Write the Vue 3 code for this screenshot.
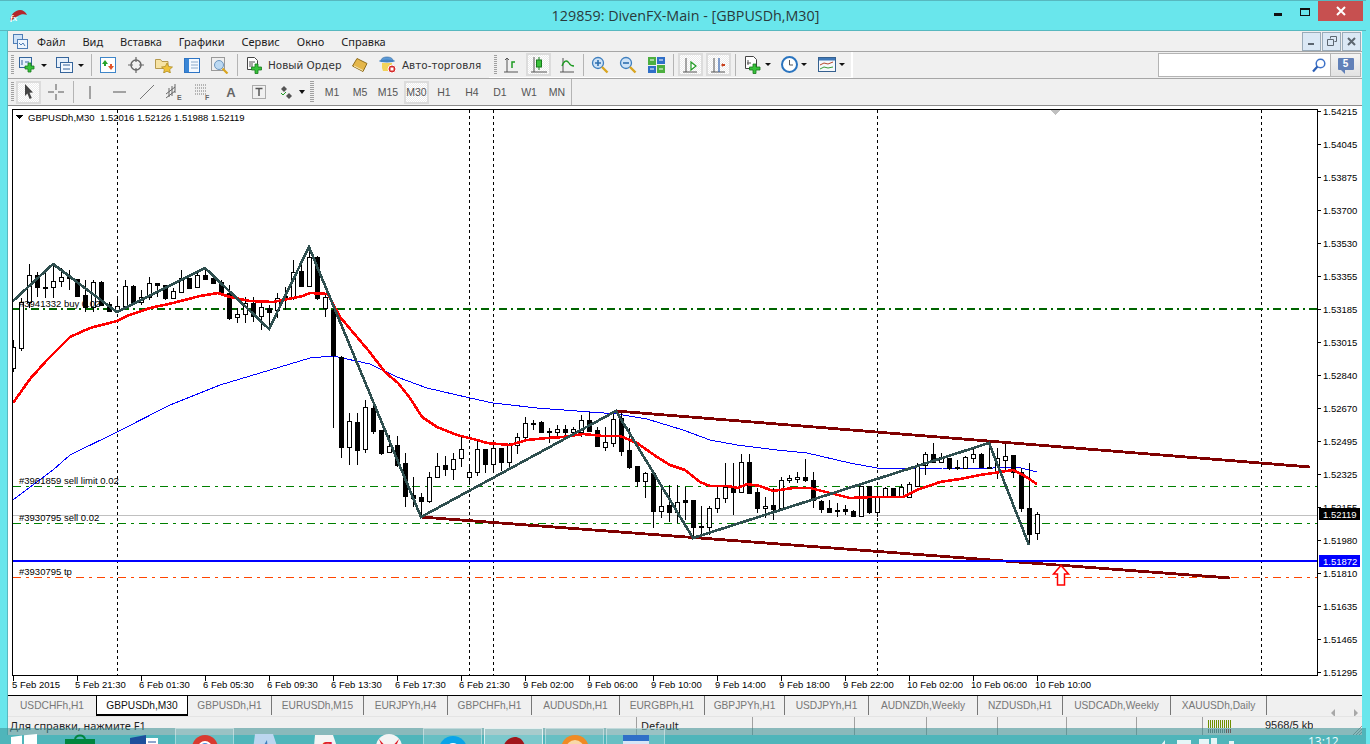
<script setup>
// [top, bottom, high, low, white] in chart pixels, one candle every 8px from x=13
const raw = [
  [347,368,340,372,1],[302,348,298,351,1],[275,302,264,308,1],[275,287,272,297,0],[287,288,273,298,0],
  [281,287,265,298,1],[277,281,268,287,1],[277,278,270,290,0],[279,296,279,297,0],[295,307,280,312,0],
  [282,307,280,312,1],[282,305,281,306,0],[304,311,302,312,0],[306,311,298,313,1],[286,306,280,308,1],
  [286,302,285,305,0],[297,302,290,305,1],[283,297,277,300,1],[283,285,283,297,0],[285,298,285,300,0],
  [291,298,288,299,1],[278,292,270,293,1],[278,288,278,289,0],[275,287,270,288,1],[275,279,268,280,0],
  [278,283,275,284,0],[282,293,280,295,0],[293,318,285,320,0],[314,317,308,323,1],[303,314,297,323,1],
  [303,316,297,322,0],[307,316,302,330,1],[308,312,305,327,0],[298,310,293,318,1],[296,298,287,310,0],
  [272,298,260,300,1],[271,286,260,287,0],[257,286,247,287,1],[257,298,256,300,0],[297,308,295,317,1],
  [310,355,308,428,0],[357,447,356,458,0],[421,447,413,465,1],[422,450,413,465,0],[407,449,400,453,1],
  [408,431,400,434,0],[430,453,430,455,0],[446,452,435,453,1],[445,465,436,467,0],[463,496,453,507,0],
  [495,498,477,507,0],[497,501,493,518,0],[477,501,472,503,1],[466,477,453,478,1],[465,469,456,476,0],
  [459,469,453,480,1],[449,458,437,467,1],[472,477,465,483,1],[449,472,441,476,1],[449,464,449,473,0],
  [448,464,445,473,1],[448,462,448,471,0],[445,462,443,467,1],[437,445,433,454,1],[423,437,417,441,1],
  [423,424,420,430,1],[422,432,421,433,0],[431,432,428,443,0],[429,432,425,437,1],[429,432,425,437,0],
  [429,432,427,437,1],[420,432,415,437,1],[420,431,412,432,0],[430,446,427,447,0],[442,447,427,451,1],
  [419,443,412,447,1],[418,451,412,456,0],[450,467,428,469,0],[466,481,466,487,0],[473,481,472,498,1],
  [473,511,473,528,0],[506,511,485,518,1],[505,512,485,522,0],[502,512,485,523,1],[500,502,487,520,0],
  [500,527,500,537,0],[526,527,506,535,0],[508,527,506,535,1],[498,508,485,513,1],[487,498,463,503,1],
  [488,492,463,515,0],[462,492,454,493,1],[462,493,454,494,0],[492,508,488,513,0],[506,508,497,518,1],
  [505,509,488,520,0],[480,508,477,510,1],[478,480,475,483,1],[477,479,472,483,1],[477,480,459,482,0],
  [480,500,472,508,0],[501,509,500,513,0],[508,512,500,512,0],[510,511,503,517,0],[509,511,505,515,0],
  [511,516,510,517,0],[486,516,486,517,1],[486,512,486,514,0],[497,512,487,517,1],[488,497,487,498,1],
  [488,497,488,498,0],[487,497,484,498,1],[484,497,482,497,1],[465,486,463,487,1],[454,465,452,475,1],
  [454,462,443,463,0],[457,462,453,462,1],[458,468,458,470,0],[467,468,460,470,1],[457,468,456,469,1],
  [454,458,448,463,1],[454,467,453,468,0],[467,468,442,469,0],[458,472,448,479,1],[456,460,444,470,1],
  [455,472,455,478,0],[472,508,468,512,0],[508,534,463,545,0],[514,533,512,540,1]
]
const candles = raw.map((c, i) => ({
  x: 13 + i * 8, top: c[0], bottom: c[1], high: c[2], low: c[3], white: c[4] === 1
}))

const zigzag = '13,301 53,264 117,312 205,268 269,329 309,247 421,517 616,411 693,538 989,443 1029,545'
const redLine = '13,403 30,379 47,360 70,337 90,328 117,321 127,316 150,308 173,303 200,296 218,293 230,297 250,301 273,302 293,298 303,296 310,293 328,294 340,317 368,350 385,372 398,383 410,398 422,417 437,427 457,435 477,440 487,443 510,445 527,440 547,438 563,437 583,434 603,436 620,436 637,443 657,457 670,465 685,470 700,482 710,486 727,486 738,488 747,484 760,486 773,491 793,488 810,488 830,493 850,498 873,497 903,497 917,490 940,482 960,479 980,475 1000,472 1013,470 1023,475 1037,484'
const blueLine = '13,500 53,470 70,455 117,432 170,405 220,385 270,370 310,358 333,356 370,364 397,377 427,388 470,398 493,403 537,408 590,412 617,414 647,419 683,430 710,440 737,445 777,450 807,453 850,463 877,468 910,469 943,468 993,468 1017,467 1037,472'

const prices = ['1.54215','1.54045','1.53875','1.53700','1.53530','1.53355','1.53185','1.53015','1.52840','1.52670','1.52495','1.52325','1.52155','1.51980','1.51810','1.51635','1.51465','1.51295']
const dates = ['5 Feb 2015','5 Feb 21:30','6 Feb 01:30','6 Feb 05:30','6 Feb 09:30','6 Feb 13:30','6 Feb 17:30','6 Feb 21:30','9 Feb 02:00','9 Feb 06:00','9 Feb 10:00','9 Feb 14:00','9 Feb 18:00','9 Feb 22:00','10 Feb 02:00','10 Feb 06:00','10 Feb 10:00']
const vlines = [117, 469, 493, 877, 1261]

const tabs = [
  { name: 'USDCHFh,H1', w: 88 },
  { name: 'GBPUSDh,M30', w: 92, active: true },
  { name: 'GBPUSDh,H1', w: 84 },
  { name: 'EURUSDh,M15', w: 92 },
  { name: 'EURJPYh,H4', w: 84 },
  { name: 'GBPCHFh,H1', w: 84 },
  { name: 'AUDUSDh,H1', w: 88 },
  { name: 'EURGBPh,H1', w: 85 },
  { name: 'GBPJPYh,H1', w: 80 },
  { name: 'USDJPYh,H1', w: 84 },
  { name: 'AUDNZDh,Weekly', w: 109 },
  { name: 'NZDUSDh,H1', w: 85 },
  { name: 'USDCADh,Weekly', w: 108 },
  { name: 'XAUUSDh,Daily', w: 96 }
]
const menu = ['Файл', 'Вид', 'Вставка', 'Графики', 'Сервис', 'Окно', 'Справка']
const statusCells = [
  { w: 629, text: 'Для справки, нажмите F1' },
  { w: 116, text: 'Default' },
  { w: 102 }, { w: 72 }, { w: 71 }, { w: 69 }, { w: 70 }, { w: 66 }
]
const bars = Array.from({ length: 12 }, (_, i) => i)
</script>

<template>
  <div class="screen">
    <header class="titlebar">
      <svg class="app-icon" width="17" height="12" viewBox="0 0 17 12">
        <path d="M0 11C0 5 5 0 10 0c3 0 6 2 7 5-3-1-6-1-9 1-3 1-5 4-8 5z" fill="#b3262b" />
        <text x="0" y="11" class="ico-fx">fx</text>
      </svg>
      <div class="title">129859: DivenFX-Main - [GBPUSDh,M30]</div>
      <div class="winctl">
        <span class="wmin"></span>
        <span class="wmax"></span>
        <span class="wclose">
          <svg width="10" height="10" viewBox="0 0 10 10"><path d="M1 1l8 8M9 1l-8 8" stroke="#fff" stroke-width="2" /></svg>
        </span>
      </div>
    </header>

    <div class="win">
      <div class="menu">
        <svg class="doc-icon" width="15" height="15" viewBox="0 0 15 15">
          <rect x=".5" y=".5" width="9" height="9" fill="#cfe2f7" stroke="#4f7db5" />
          <rect x="4.5" y="5.5" width="10" height="9" fill="#eef5fd" stroke="#4f7db5" />
          <path d="M6 9l2 2 2-2 2 3" fill="none" stroke="#4f7db5" />
        </svg>
        <span v-for="m in menu" :key="m" class="menu-item">{{ m }}</span>
        <div class="mdi">
          <span class="mdi-btn"><svg width="9" height="9" viewBox="0 0 9 9"><rect x="1" y="6" width="6" height="2" fill="#5c6670" /></svg></span>
          <span class="mdi-btn"><svg width="10" height="10" viewBox="0 0 10 10"><path d="M3.5 2.5v-2h6v5h-2M.5 3.5h6v6h-6z" fill="none" stroke="#5c6670" /></svg></span>
          <span class="mdi-btn"><svg width="9" height="9" viewBox="0 0 9 9"><path d="M1 1l7 7M8 1l-7 7" stroke="#5c6670" stroke-width="2" /></svg></span>
        </div>
      </div>

      <div class="row row1">
        <div class="bar">
          <i class="grip"></i>
          <div class="btn w36">
            <svg width="17" height="16" viewBox="0 0 17 16">
              <rect x=".5" y=".5" width="12" height="10" fill="#e6f0fb" stroke="#36659b" />
              <path d="M3 3v5M6 5h4" stroke="#36659b" />
              <path d="M9 6h3v3h3v3h-3v3H9v-3H6V9h3z" fill="#37c23a" stroke="#177a1c" stroke-width=".8" />
            </svg>
            <i class="caret"></i>
          </div>
          <div class="btn w38">
            <svg width="17" height="16" viewBox="0 0 17 16">
              <rect x=".5" y=".5" width="12" height="10" fill="#e6f0fb" stroke="#36659b" />
              <rect x="4.5" y="5.5" width="12" height="10" fill="#f3f8fe" stroke="#36659b" />
              <path d="M7 8h7M7 12h7" stroke="#36659b" />
            </svg>
            <i class="caret"></i>
          </div>
          <i class="sep"></i>
          <div class="btn">
            <svg width="16" height="16" viewBox="0 0 16 16">
              <rect x=".5" y=".5" width="15" height="15" fill="#fff" stroke="#3f86c9" />
              <path d="M5 3l3 4H6v2H4V7H2z" fill="#26a32b" />
              <path d="M11 13L8 9h2V7h2v2h2z" fill="#e2552a" />
            </svg>
          </div>
          <div class="btn">
            <svg width="16" height="16" viewBox="0 0 16 16">
              <circle cx="8" cy="8" r="5" fill="none" stroke="#666" stroke-width="1.4" />
              <path d="M8 0v5M8 11v5M0 8h5M11 8h5" stroke="#666" stroke-width="1.2" />
            </svg>
          </div>
          <div class="btn">
            <svg width="18" height="16" viewBox="0 0 18 16">
              <path d="M.5 2.5h5l1.500 2h6v7h-12.500z" fill="#f6e3a4" stroke="#b69a4e" />
              <path d="M12 6l1.700 3.500 3.800.5-2.800 2.600.7 3.400-3.400-1.800-3.400 1.800.7-3.400L6.500 10l3.800-.5z" fill="#efc23a" stroke="#a8851d" stroke-width=".7" />
            </svg>
          </div>
          <div class="btn">
            <svg width="16" height="15" viewBox="0 0 16 15">
              <rect x=".5" y=".5" width="15" height="14" fill="#f4f9ff" stroke="#2d74c4" />
              <rect x="1" y="1" width="4" height="13" fill="#3a86d6" />
              <path d="M7 4h7M7 7h7M7 10h7" stroke="#8aa8c8" />
            </svg>
          </div>
          <div class="btn">
            <svg width="18" height="17" viewBox="0 0 18 17">
              <rect x=".5" y=".5" width="13" height="13" fill="#efefef" stroke="#9a9a9a" />
              <circle cx="8" cy="8" r="4.500" fill="#bcd9f2" stroke="#6e97bf" />
              <path d="M11.500 11.500l5 5" stroke="#d9a520" stroke-width="2.200" />
            </svg>
          </div>
          <i class="sep"></i>
          <div class="btn btn-text pl7">
            <svg width="16" height="17" viewBox="0 0 16 17">
              <path d="M.5.500h7l3 3v9h-10z" fill="#fff" stroke="#444" />
              <path d="M2 5h6M2 7h4M2 9h4" stroke="#555" />
              <path d="M8 7h3v3h3.500v3H11v3.500H8V13H4.500v-3H8z" fill="#37c23a" stroke="#177a1c" stroke-width=".8" />
            </svg>
            <span class="btn-label lab-order">Новый Ордер</span>
          </div>
          <div class="btn w29">
            <svg width="16" height="14" viewBox="0 0 16 14">
              <path d="M5 .500l10 5-4 8L.500 8z" fill="#e4b64a" stroke="#8f6d1c" />
              <path d="M2 8l9 4.500" stroke="#f7e8b8" />
            </svg>
          </div>
          <div class="btn btn-text pl5">
            <svg width="18" height="18" viewBox="0 0 18 18">
              <path d="M2 5c0-3 3-4 6-4s6 1 6 4z" fill="#5c9ad6" stroke="#356a9f" stroke-width=".6" />
              <ellipse cx="8" cy="5" rx="8" ry="1.500" fill="#4383c2" />
              <path d="M3 7h10v4l-2 4H4L3 12z" fill="#f2d35a" />
              <circle cx="13" cy="13" r="4" fill="#d62c2c" stroke="#fff" />
              <rect x="11.500" y="11.500" width="3" height="3" fill="#fff" />
            </svg>
            <span class="btn-label lab-auto">Авто-торговля</span>
          </div>
        </div>
        <div class="bar bar2">
          <i class="grip"></i>
          <div class="btn">
            <svg width="16" height="16" viewBox="0 0 16 16">
              <path d="M4 1v14M1 15h14M4 1L2 3M4 1l2 2" fill="none" stroke="#555" />
              <path d="M9 11V5h3" fill="none" stroke="#1e9a22" stroke-width="1.500" />
            </svg>
          </div>
          <div class="btn pressed w25 ml1">
            <svg width="16" height="17" viewBox="0 0 16 17">
              <path d="M3 1v15M0 16h16" fill="none" stroke="#555" />
              <path d="M8 1v13" stroke="#177a1c" />
              <rect x="5.500" y="4" width="5" height="7" fill="#3ac23a" stroke="#177a1c" />
            </svg>
          </div>
          <div class="btn ml2">
            <svg width="16" height="16" viewBox="0 0 16 16">
              <path d="M4 1v14M1 15h14" fill="none" stroke="#555" />
              <path d="M3 9c2-6 5-6 7-3 1 2 3 3 5 3" fill="none" stroke="#1e9a22" stroke-width="1.300" />
            </svg>
          </div>
          <i class="sep sep0"></i>
          <div class="btn">
            <svg width="18" height="18" viewBox="0 0 18 18">
              <circle cx="7" cy="7" r="5.500" fill="#cfe3f7" stroke="#3f7fbe" stroke-width="1.300" />
              <path d="M4 7h6M7 4v6" stroke="#2f6fae" stroke-width="1.600" />
              <path d="M11 11l5.500 5.500" stroke="#d9a520" stroke-width="2.400" />
            </svg>
          </div>
          <div class="btn">
            <svg width="18" height="18" viewBox="0 0 18 18">
              <circle cx="7" cy="7" r="5.500" fill="#cfe3f7" stroke="#3f7fbe" stroke-width="1.300" />
              <path d="M4 7h6" stroke="#2f6fae" stroke-width="1.600" />
              <path d="M11 11l5.500 5.500" stroke="#d9a520" stroke-width="2.400" />
            </svg>
          </div>
          <div class="btn">
            <svg width="17" height="16" viewBox="0 0 17 16">
              <rect width="8" height="8" fill="#4caf3f" />
              <rect x="9" width="8" height="7" fill="#2f6fc8" />
              <rect y="9" width="8" height="7" fill="#2f6fc8" />
              <rect x="9" y="8" width="8" height="8" fill="#4caf3f" />
              <path d="M2 3h4M11 3h4M2 12h4M11 12h4" stroke="#fff" />
            </svg>
          </div>
          <i class="sep"></i>
          <div class="btn pressed w25 ml2">
            <svg width="15" height="16" viewBox="0 0 15 16">
              <path d="M3 1v14M0 15h14" fill="none" stroke="#555" />
              <path d="M8 5l5 4-5 4z" fill="#fff" stroke="#1e9a22" stroke-width="1.200" />
            </svg>
          </div>
          <div class="btn pressed w25 ml3">
            <svg width="15" height="16" viewBox="0 0 15 16">
              <path d="M3 1v14M0 15h14" fill="none" stroke="#555" />
              <path d="M8 1v14" stroke="#2f5fae" stroke-width="1.200" />
              <path d="M10 8l2-2v1h2v2h-2v1z" fill="#c8401c" />
            </svg>
          </div>
          <i class="sep sep1"></i>
          <div class="btn w38 pl7">
            <svg width="17" height="18" viewBox="0 0 17 18">
              <path d="M.5.500h8l3 3v9h-11z" fill="#fff" stroke="#444" />
              <path d="M3 4v5M2 7h4" stroke="#555" />
              <path d="M8 8h3v3h4v3h-4v3.500H8V14H4.500v-3H8z" fill="#37c23a" stroke="#177a1c" stroke-width=".8" />
            </svg>
            <i class="caret caret-sm"></i>
          </div>
          <div class="btn w37 pl5">
            <svg width="17" height="17" viewBox="0 0 17 17">
              <circle cx="8.500" cy="8.500" r="7.500" fill="#fff" stroke="#2a74bf" stroke-width="2" />
              <path d="M8.500 4v5h3.500" fill="none" stroke="#555" />
            </svg>
            <i class="caret caret-sm"></i>
          </div>
          <div class="btn w38 pl5">
            <svg width="18" height="15" viewBox="0 0 18 15">
              <rect x=".5" y=".5" width="17" height="14" fill="#f4f8fd" stroke="#35608f" />
              <rect x="1" y="1" width="16" height="2.500" fill="#3f78b8" />
              <path d="M2 8l4-2 4 1 5-2" fill="none" stroke="#b5482c" />
              <path d="M2 12l4-2 4 1 5-1" fill="none" stroke="#3a9a3a" />
            </svg>
            <i class="caret caret-sm"></i>
          </div>
        </div>
        <div class="search">
          <div class="search-box">
            <svg width="14" height="15" viewBox="0 0 14 15">
              <circle cx="8.500" cy="5.500" r="4.300" fill="#fff" stroke="#3d72c8" stroke-width="1.500" />
              <path d="M5.500 8.500L1 13.500" stroke="#2d5fb5" stroke-width="2.200" />
            </svg>
          </div>
          <div class="msg-btn">
            <span class="bubble">5</span>
          </div>
        </div>
      </div>

      <div class="row row2">
        <i class="grip"></i>
        <div class="btn pressed w25 ml2">
          <svg width="10" height="16" viewBox="0 0 10 16"><path d="M1 0l8 8.500-3.500.2 2.300 5.300-2.200 1-2.200-5.400L1 12z" fill="#444" /></svg>
        </div>
        <div class="btn w28 ml1">
          <svg width="16" height="16" viewBox="0 0 16 16"><path d="M8 0v6M8 10v6M0 8h6M10 8h6" stroke="#555" /></svg>
        </div>
        <i class="sep"></i>
        <div class="btn"><svg width="2" height="13" viewBox="0 0 2 13"><path d="M1 0v13" stroke="#555" /></svg></div>
        <div class="btn ml1"><svg width="13" height="2" viewBox="0 0 13 2"><path d="M0 1h13" stroke="#555" /></svg></div>
        <div class="btn"><svg width="14" height="14" viewBox="0 0 14 14"><path d="M0 14L14 0" stroke="#777" /></svg></div>
        <div class="btn w27">
          <svg width="18" height="18" viewBox="0 0 18 18">
            <path d="M0 11L9 4M0 15L9 8M3 14V5M6 13V3M9 10V1" stroke="#666" />
            <text x="11" y="17" class="ico-letter">E</text>
          </svg>
        </div>
        <div class="btn ml1">
          <svg width="16" height="18" viewBox="0 0 16 18">
            <path d="M0 2h12M0 5h12M0 8h12M0 11h12" stroke="#777" stroke-dasharray="1 1" />
            <text x="10" y="17" class="ico-letter">F</text>
          </svg>
        </div>
        <div class="btn"><span class="ico-a">A</span></div>
        <div class="btn w27">
          <svg width="14" height="14" viewBox="0 0 14 14">
            <rect x=".5" y=".5" width="13" height="13" fill="none" stroke="#666" stroke-dasharray="1 1" />
            <path d="M3.500 3.500h7M7 3.500v7.500" stroke="#555" stroke-width="1.500" />
          </svg>
        </div>
        <div class="btn w37 pl8">
          <svg width="13" height="13" viewBox="0 0 13 13">
            <path d="M4 0l3 3-3 3-3-3z" fill="#555" />
            <path d="M9 7l3 3-3 3-3-3z" fill="#555" />
            <path d="M1 7l2 2 3-3" fill="none" stroke="#1e9a22" />
          </svg>
          <i class="caret caret-md"></i>
        </div>
        <i class="grip grip-r"></i>
        <div class="tf ml4">M1</div>
        <div class="tf">M5</div>
        <div class="tf">M15</div>
        <div class="tf tf-on">M30</div>
        <div class="tf ml1">H1</div>
        <div class="tf">H4</div>
        <div class="tf">D1</div>
        <div class="tf ml1">W1</div>
        <div class="tf">MN</div>
        <i class="sep-line"></i>
      </div>

      <svg class="chart" width="1354" height="589" viewBox="8 106 1354 589" shape-rendering="crispEdges">
        <rect x="8" y="106" width="1354" height="589" fill="#fff" />
        <defs>
          <clipPath id="plot"><rect x="13" y="110" width="1304" height="565" /></clipPath>
        </defs>

        <g clip-path="url(#plot)">
          <line v-for="x in vlines" :key="x" :x1="x + .5" y1="110" :x2="x + .5" y2="675" class="grid" />
          <line x1="13" y1="515.500" x2="1317" y2="515.500" stroke="#c0c0c0" />
          <line x1="13" y1="309" x2="1317" y2="309" class="order-thick" />
          <line x1="13" y1="486.500" x2="1317" y2="486.500" class="order" />
          <line x1="13" y1="523.500" x2="1317" y2="523.500" class="order" />
          <line x1="13" y1="577.500" x2="1317" y2="577.500" class="order-tp" />

          <polyline :points="blueLine" class="ma-blue" />

          <g v-for="c in candles" :key="c.x">
            <line :x1="c.x + .5" :y1="c.high" :x2="c.x + .5" :y2="c.low" stroke="#000" />
            <rect :x="c.x - 1.5" :y="c.top + .5" width="4" :height="Math.max(c.bottom - c.top, 1)"
                  :fill="c.white ? '#fff' : '#000'" stroke="#000" />
          </g>

          <polyline :points="redLine" class="ma-red" />
          <line x1="616" y1="411" x2="1310" y2="467" class="channel" />
          <line x1="421" y1="517" x2="1230" y2="578" class="channel" />
          <polyline :points="zigzag" class="zigzag" />
          <line x1="13" y1="561" x2="1317" y2="561" class="bid" />

          <path d="M1061 565.500l7.500 8.500h-4v11h-7v-11h-4z" fill="#fff" stroke="#f00" stroke-width="1.500" shape-rendering="auto" />
          <path d="M1050 110h11l-5.500 5z" fill="#c0c0c0" />

          <text x="19" y="307" class="lbl">#3941332 buy 0.02</text>
          <text x="19" y="484" class="lbl">#3961859 sell limit 0.02</text>
          <text x="19" y="521" class="lbl">#3930795 sell 0.02</text>
          <text x="19" y="575" class="lbl">#3930795 tp</text>
        </g>

        <path d="M16 115h7l-3.500 4z" fill="#000" />
        <text x="28" y="120.500" class="lbl">GBPUSDh,M30</text>
        <text x="100" y="120.500" class="lbl">1.52016 1.52126 1.51988 1.52119</text>

        <rect x="12.500" y="109.500" width="1305" height="566" fill="none" stroke="#000" />

        <g v-for="(p, i) in prices" :key="p">
          <line x1="1317" :y1="111.500 + i * 33" x2="1321" :y2="111.500 + i * 33" stroke="#000" />
          <text x="1323" :y="115 + i * 33" class="lbl">{{ p }}</text>
        </g>
        <g v-for="(d, i) in dates" :key="d">
          <line :x1="13.500 + i * 64" y1="676" :x2="13.500 + i * 64" y2="681" stroke="#000" />
          <text :x="(i === 0 ? 12 : 11) + i * 64" y="688" class="lbl">{{ d }}</text>
        </g>

        <rect x="1319" y="508" width="41" height="12" fill="#000" />
        <text x="1323" y="518" class="lbl lbl-w">1.52119</text>
        <rect x="1319" y="555" width="41" height="12" fill="#0000ff" />
        <text x="1323" y="565" class="lbl lbl-w">1.51872</text>
      </svg>

      <div class="tabs">
        <div v-for="t in tabs" :key="t.name" class="tab" :class="{ active: t.active }" :style="{ width: t.w + 'px' }">{{ t.name }}</div>
        <div class="tab-arrows">
          <svg width="30" height="9" viewBox="0 0 30 9"><path d="M5 0v8L1 4zM24 0v8l4-4z" fill="#a8a8a8" /></svg>
        </div>
      </div>

      <div class="status">
        <div v-for="(c, i) in statusCells" :key="i" class="cell" :style="{ width: c.w + 'px' }">{{ c.text }}</div>
        <div class="cell cell-bars">
          <svg width="24" height="13" viewBox="0 0 24 13">
            <g v-for="b in bars" :key="b">
              <rect :x="b * 2" y="0" width="1" height="8" fill="#6f8f00" />
              <rect :x="b * 2" y="9" width="1" height="4" :fill="b > 8 ? '#a02020' : '#777'" />
            </g>
          </svg>
          <span class="mem">9568/5 kb</span>
        </div>
        <svg class="resize" width="9" height="9" viewBox="0 0 9 9"><path d="M0 9l9-9M3 9l6-6M6 9l3-3" stroke="#999" /></svg>
      </div>
    </div>

    <footer class="taskbar">
      <div class="tk" style="width:48px">
        <svg width="26" height="24" viewBox="0 0 26 24"><path d="M0 3l11-1.500V11H0zM13 1.200L26 0v11H13zM0 13h11v9L0 21zM13 13h13v11l-13-2z" fill="#fff" /></svg>
      </div>
      <div class="tk" style="width:64px">
        <svg width="30" height="24" viewBox="0 0 30 24"><path d="M0 5h30v19H0z" fill="#00853e" /><path d="M10 6c0-6 10-6 10 0" fill="none" stroke="#00853e" stroke-width="2" /></svg>
      </div>
      <div class="tk" style="width:63px">
        <svg width="28" height="24" viewBox="0 0 28 24"><path d="M0 4l16-3v23H0z" fill="#1d4f9c" /><path d="M16 4h12v20H16z" fill="#fff" /><path d="M18 8h8M18 11h8" stroke="#1d4f9c" /></svg>
      </div>
      <div class="tk on">
        <svg width="26" height="26" viewBox="0 0 26 26"><circle cx="13" cy="13" r="13" fill="#d93a2f" /><path d="M13 13L2 22A13 13 0 0 0 26 13z" fill="#f0c419" /><circle cx="13" cy="13" r="6" fill="#4a8be0" stroke="#fff" stroke-width="2" /></svg>
      </div>
      <div class="tk tk61">
        <svg width="29" height="24" viewBox="0 0 29 24"><path d="M3 0h18l8 24H0z" fill="#bcd6ef" /><path d="M15 6l-6 10 7 3z" fill="#3f7fbe" /></svg>
      </div>
      <div class="tk tk61">
        <svg width="28" height="24" viewBox="0 0 28 24"><path d="M2 1h18l8 23H0z" fill="#f4f4f4" /><text x="9" y="18" class="ico-ya">Я</text></svg>
      </div>
      <div class="tk tk65">
        <svg width="26" height="24" viewBox="0 0 26 24"><circle cx="13" cy="13" r="13" fill="#f4f4f4" /><path d="M3 5l10 11L23 5l-7 17h-6z" fill="#e0212b" /></svg>
      </div>
      <div class="tk on">
        <svg width="30" height="24" viewBox="0 0 30 24"><circle cx="15" cy="15" r="14" fill="#0aa4e8" /><circle cx="15" cy="15" r="7" fill="#fff" /></svg>
      </div>
      <div class="tk on tk-active">
        <svg width="26" height="22" viewBox="0 0 26 22"><path d="M0 22C0 10 7 2 14 2c6 0 11 5 12 20z" fill="#a1161b" /></svg>
      </div>
      <div class="tk on">
        <svg width="28" height="24" viewBox="0 0 28 24"><circle cx="14" cy="14" r="14" fill="#f08a24" /><circle cx="14" cy="14" r="9" fill="#f8d8a8" /></svg>
      </div>
      <div class="tk on">
        <svg width="26" height="24" viewBox="0 0 26 24"><rect width="26" height="24" fill="#d6e6f7" /><rect width="26" height="6" fill="#2f6fc8" /><rect x="4" y="9" width="8" height="6" fill="#3a9a3a" /></svg>
      </div>
      <div class="tray">
        <svg width="74" height="8" viewBox="0 0 74 8"><path d="M0 8l4-5v5zM16 3h14v5H16zM38 2h10v6H38zM50 1h6v7h-6zM68 4h5v4h-5z" fill="#e6f6f7" /></svg>
        <span class="clock">13:12</span>
      </div>
    </footer>
  </div>
</template>

<style>
html, body { background: #69e6ec; overflow: hidden; }
</style>

<style scoped>
.screen {
  position: relative;
  width: 1366px;
  height: 744px;
  overflow: hidden;
  background: #69e6ec;
  font-family: "Noto Sans", sans-serif;
}
.titlebar {
  display: flex;
  align-items: center;
  border-top: 1px solid #57b8bf;
  box-sizing: border-box;
  border-bottom: 1px solid #57b8bf;
  height: 31px;
}
.app-icon { margin-left: 10px; }
.title {
  flex: 1;
  text-align: center;
  font-family: "Open Sans", sans-serif;
  font-size: 14.300px;
  color: #2a3a3c;
  margin-left: 70px;
}
.winctl { display: flex; align-self: flex-start; margin-right: 3px; }
.wmin { width: 8px; height: 3px; background: #111; margin: 12px 18px 0 0; }
.wmax { width: 8px; height: 5px; border: 1.500px solid #111; border-top-width: 2px; margin: 7px 8px 0 0; }
.wclose {
  width: 45px;
  height: 20px;
  background: #c75050;
  display: flex;
  align-items: center;
  justify-content: center;
}

.win {
  margin-left: 7px;
  width: 1355px;
  height: 704px;
  border-left: 1px solid #58b9c0;
  box-sizing: border-box;
  background: #f0f0f0;
  display: flex;
  flex-direction: column;
}
.menu {
  height: 21px;
  flex: none;
  border-bottom: 1px solid #a6a6a6;
  box-sizing: border-box;
  display: flex;
  align-items: center;
  font-size: 11px;
  color: #1c1c1c;
  padding-left: 5px;
}
.doc-icon { margin-right: 9px; }
.menu-item { margin-right: 17px; }
.mdi { margin-left: auto; display: flex; gap: 1px; margin-right: 1px; }
.mdi-btn {
  width: 17px;
  height: 17px;
  border: 1px solid #9aabb9;
  background: #dbe8f5;
  display: flex;
  align-items: center;
  justify-content: center;
}

.row {
  height: 27px;
  flex: none;
  display: flex;
  align-items: center;
  box-sizing: border-box;
}
.row1 { border-bottom: 1px solid #a6a6a6; align-items: stretch; }
.row2 { border-bottom: 1px solid #8c8c8c; padding-left: 3px; }
.bar { display: flex; align-items: center; padding-left: 3px; width: 478px; flex: none; }
.bar2 { width: 357px; padding-left: 5px; border-right: 2px solid #fff; border-bottom: 1px solid #fff; }
.grip {
  width: 3px;
  height: 20px;
  flex: none;
  background: repeating-linear-gradient(to bottom, #a0a0a0 0 1px, transparent 1px 2px);
}
.grip-r { margin-left: 1px; height: 22px; width: 4px; }
.btn {
  width: 28px;
  height: 23px;
  flex: none;
  box-sizing: border-box;
  display: flex;
  align-items: center;
  justify-content: center;
}
.btn svg { flex: none; }
.w25 { width: 25px; }
.w27 { width: 27px; }
.w28 { width: 28px; }
.w29 { width: 29px; }
.w36 { width: 36px; justify-content: flex-start; padding-left: 5px; gap: 5px; }
.w37 { width: 37px; }
.w38 { width: 38px; justify-content: flex-start; padding-left: 6px; gap: 5px; }
.pl5 { justify-content: flex-start; padding-left: 5px; gap: 5px; }
.pl7 { justify-content: flex-start; padding-left: 7px; gap: 5px; }
.pl8 { justify-content: flex-start; padding-left: 8px; gap: 6px; }
.ml1 { margin-left: 1px; }
.ml2 { margin-left: 2px; }
.ml3 { margin-left: 3px; }
.ml4 { margin-left: 4px; }
.btn-text { width: auto; }
.btn-label {
  font-family: "DejaVu Sans", sans-serif;
  font-size: 10.400px;
  color: #333;
  white-space: nowrap;
}
.lab-order { width: 77px; }
.lab-auto { width: 83px; }
.pressed {
  background: repeating-conic-gradient(#fff 0 25%, #ececec 0 50%) 0 0 / 2px 2px;
  border: 2px solid #dcdcdc;
}
.caret {
  width: 0;
  height: 0;
  flex: none;
  border: 3px solid transparent;
  border-top: 3px solid #111;
  border-bottom: 0;
}
.caret-sm { margin-left: -2px; }
.caret-md { border-width: 4px 3px 0; }
.sep {
  width: 6px;
  height: 22px;
  flex: none;
  background: linear-gradient(#b4b4b4, #b4b4b4) center / 1px 100% no-repeat;
}
.sep0 { margin-left: -1px; }
.sep1 { margin-left: 1px; }
.sep-line { width: 1px; height: 26px; background: #b4b4b4; }

.search { margin-left: auto; display: flex; margin-right: 1px; margin-top: 1px; height: 24px; }
.search-box {
  width: 173px;
  box-sizing: border-box;
  background: #fff;
  border: 1px solid #b4b4b4;
  display: flex;
  align-items: center;
  justify-content: flex-end;
  padding-right: 4px;
}
.msg-btn {
  width: 30px;
  box-sizing: border-box;
  border: 1px solid #b4b4b4;
  border-left: 0;
  background: linear-gradient(#f4f4f4, #e2e2e2);
  display: flex;
  align-items: center;
  justify-content: center;
}
.bubble {
  position: relative;
  width: 16px;
  height: 12px;
  background: #6281b8;
  color: #fff;
  font: bold 10px/12px "Liberation Sans", sans-serif;
  text-align: center;
  border-radius: 1px;
  margin-top: -2px;
}
.bubble::after {
  content: "";
  position: absolute;
  left: 3px;
  top: 12px;
  border-top: 4px solid #6281b8;
  border-left: 4px solid transparent;
}
.ico-fx { font: italic bold 9px "Liberation Serif", serif; fill: #fff; }
.ico-letter { font: bold 7px "Liberation Sans", sans-serif; fill: #666; }
.ico-a { font: bold 13px "Liberation Sans", sans-serif; color: #666; }
.ico-ya { font: bold 15px "Liberation Sans", sans-serif; fill: #e0212b; }
.tf {
  width: 28px;
  height: 23px;
  flex: none;
  display: flex;
  align-items: center;
  justify-content: center;
  font: 10.500px "Liberation Sans", sans-serif;
  color: #555;
}
.tf-on {
  width: 25px;
  margin-left: 2px;
  box-sizing: border-box;
  border: 2px solid #dcdcdc;
  background: repeating-conic-gradient(#fff 0 25%, #ececec 0 50%) 0 0 / 2px 2px;
}

.chart { display: block; flex: none; }
.grid { stroke: #000; stroke-dasharray: 3 3; }
.order-thick { stroke: #006400; stroke-width: 2; stroke-dasharray: 8 4 2 4; }
.order { stroke: #008000; stroke-dasharray: 8 5 3 5; }
.order-tp { stroke: #ff4500; stroke-dasharray: 8 5 3 5; }
.bid { stroke: #0000ff; stroke-width: 2; }
.ma-blue { fill: none; stroke: #0000ff; stroke-width: 1; }
.ma-red { fill: none; stroke: #ff0000; stroke-width: 2.600; }
.channel { stroke: #800000; stroke-width: 2.800; }
.zigzag { fill: none; stroke: #2f4f4f; stroke-width: 2.600; }
.lbl { font: 9.500px "Liberation Sans", sans-serif; fill: #000; }
.lbl-w { fill: #fff; }

.tabs {
  height: 21px;
  flex: none;
  display: flex;
  box-sizing: border-box;
  border-top: 1px solid #000;
  position: relative;
}
.tab {
  height: 19px;
  flex: none;
  box-sizing: border-box;
  display: flex;
  align-items: center;
  justify-content: center;
  font: 10.200px "Liberation Sans", sans-serif;
  color: #777;
  border-right: 1px solid #777;
}
.tab:first-child { border-right: 0; }
.tab.active {
  background: #fff;
  color: #111;
  border: 1px solid #000;
  border-top: 0;
  border-bottom-width: 2px;
  height: 20px;
}
.tab-arrows { margin-left: auto; margin-right: 2px; padding-top: 5px; }

.status {
  height: 19px;
  flex: none;
  display: flex;
  position: relative;
  font-size: 11px;
  color: #222;
  border-top: 1px solid #e4e4e4;
  box-sizing: border-box;
}
.cell {
  flex: none;
  box-sizing: border-box;
  border-right: 1px solid #a0a0a0;
  padding: 1px 0 0 4px;
  white-space: nowrap;
  overflow: hidden;
}
.cell:first-child { padding-left: 2px; }
.cell-bars {
  display: flex;
  align-items: flex-start;
  border-right: 0;
  padding: 3px 0 0 5px;
  font: 11px "Liberation Sans", sans-serif;
}
.mem { margin-left: 33px; margin-top: -1px; }
.resize { position: absolute; right: 0; bottom: 0; }

.taskbar {
  position: absolute;
  left: 0;
  right: 0;
  bottom: 0;
  height: 16px;
  background: rgba(59, 142, 146, 0.56);
  display: flex;
  overflow: hidden;
  align-items: flex-start;
}
.tk {
  width: 59px;
  height: 30px;
  flex: none;
  box-sizing: border-box;
  display: flex;
  justify-content: center;
  padding-top: 6px;
  margin-right: 2px;
}
.tk:nth-child(-n+3) { margin-right: 0; }
.tk61 { width: 60px; margin-right: 1px; }
.tk65 { width: 61px; margin-right: 4px; }
.on {
  border: 1px solid rgba(255, 255, 255, 0.4);
  background: rgba(255, 255, 255, 0.14);
}
.tk-active { background: rgba(255, 255, 255, 0.26); border-color: rgba(255, 255, 255, 0.7); }
.tray {
  margin-left: 494px;
  display: flex;
  align-items: flex-start;
  gap: 73px;
  padding-top: 9px;
}
.clock {
  font: 12px "Open Sans", sans-serif;
  color: #eefbfc;
  margin-top: -4px;
}
</style>
